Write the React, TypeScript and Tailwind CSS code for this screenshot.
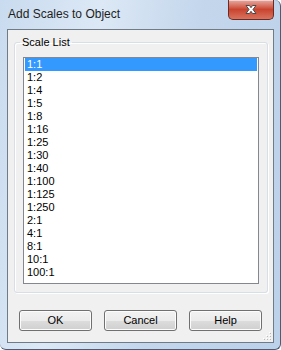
import React from "react"

const scales = ["1:1", "1:2", "1:4", "1:5", "1:8", "1:16", "1:25", "1:30", "1:40", "1:100", "1:125", "1:250", "2:1", "4:1", "8:1", "10:1", "100:1"]

const CloseButton = () => (
  <div className="mt-0 h-[20px] w-[46px] rounded-b-[5px] border border-t-0 border-[#6b2a22] bg-gradient-to-b from-[#e6aaa2] via-[#c9432f] to-[#d8735f] shadow-[inset_0_1px_0_rgba(255,255,255,0.5)] flex items-center justify-center">
    <svg width="14" height="11" viewBox="0 0 14 11">
      <path
        d="M2 1.5 L5.5 1.5 L7 3.7 L8.5 1.5 L12 1.5 L9 5.5 L12 9.5 L8.5 9.5 L7 7.3 L5.5 9.5 L2 9.5 L5 5.5 Z"
        fill="#ffffff"
        stroke="#4a4a4a"
        strokeWidth="1"
        strokeLinejoin="round"
      />
    </svg>
  </div>
)

const DialogButton = ({ label }: { label: string }) => (
  <button className="h-[21px] w-[73px] rounded-[3px] border border-[#707070] bg-[linear-gradient(#f2f2f2_0%,#ebebeb_50%,#dddddd_50%,#cfcfcf_100%)] text-[11px] leading-[19px] text-black shadow-[inset_0_0_0_1px_#fcfcfc]">
    {label}
  </button>
)

const App = () => {
  const [selected, setSelected] = React.useState(0)

  return (
    <div
      className="w-[281px] h-[350px] flex flex-col rounded-tr-[6px] rounded-b-[6px] border-r border-b border-[#4b5d73] bg-[linear-gradient(100deg,#c9dbef_0%,#dce8f5_30%,#c3d6ec_60%,#bcd1ea_100%)]"
      style={{ fontFamily: '"Liberation Sans", Arial, sans-serif' }}
    >
      {/* title bar */}
      <div className="h-[29px] flex items-start justify-between">
        <span className="pl-[8px] pt-[7px] text-[12px] leading-[15px] text-[#1e1e1e]">Add Scales to Object</span>
        <div className="mr-[6px]">
          <CloseButton />
        </div>
      </div>

      {/* client area */}
      <div className="relative ml-[7px] w-[267px] h-[314px] border border-[#707b88] bg-[#f0f0f0] flex flex-col">
        <fieldset className="mt-[6px] ml-[6px] w-[254px] rounded-[3px] border border-[#d5dfe5] shadow-[inset_1px_1px_0_#ffffff,1px_1px_0_#ffffff] pb-[8px]">
          <legend className="ml-[5px] px-[2px] text-[11px] leading-[13px] text-black">Scale List</legend>
          <div className="mt-[8px] mx-[8px] h-[227px] border border-[#828790] bg-white">
            <ul className="text-[11px] leading-[13px] text-black">
              {scales.map((s, i) => (
                <li
                  key={s}
                  onClick={() => setSelected(i)}
                  className={
                    i === selected
                      ? "h-[13px] mx-px pl-[2px] bg-[#3399ff] text-white"
                      : "h-[13px] mx-px pl-[2px]"
                  }
                >
                  {s}
                </li>
              ))}
            </ul>
          </div>
        </fieldset>

        <div className="mt-[17px] ml-[11px] flex gap-[12px]">
          <DialogButton label="OK" />
          <DialogButton label="Cancel" />
          <DialogButton label="Help" />
        </div>

        {/* resize grip */}
        <svg className="absolute right-[1px] bottom-[1px]" width="10" height="10" viewBox="0 0 10 10">
          {[[8, 2], [8, 5], [5, 5], [8, 8], [5, 8], [2, 8]].map(([x, y]) => (
            <g key={`${x}-${y}`}>
              <rect x={x} y={y} width="1" height="1" fill="#b9b9b9" />
              <rect x={x - 1} y={y - 1} width="1" height="1" fill="#ffffff" />
            </g>
          ))}
        </svg>
      </div>
    </div>
  )
}

export default App
